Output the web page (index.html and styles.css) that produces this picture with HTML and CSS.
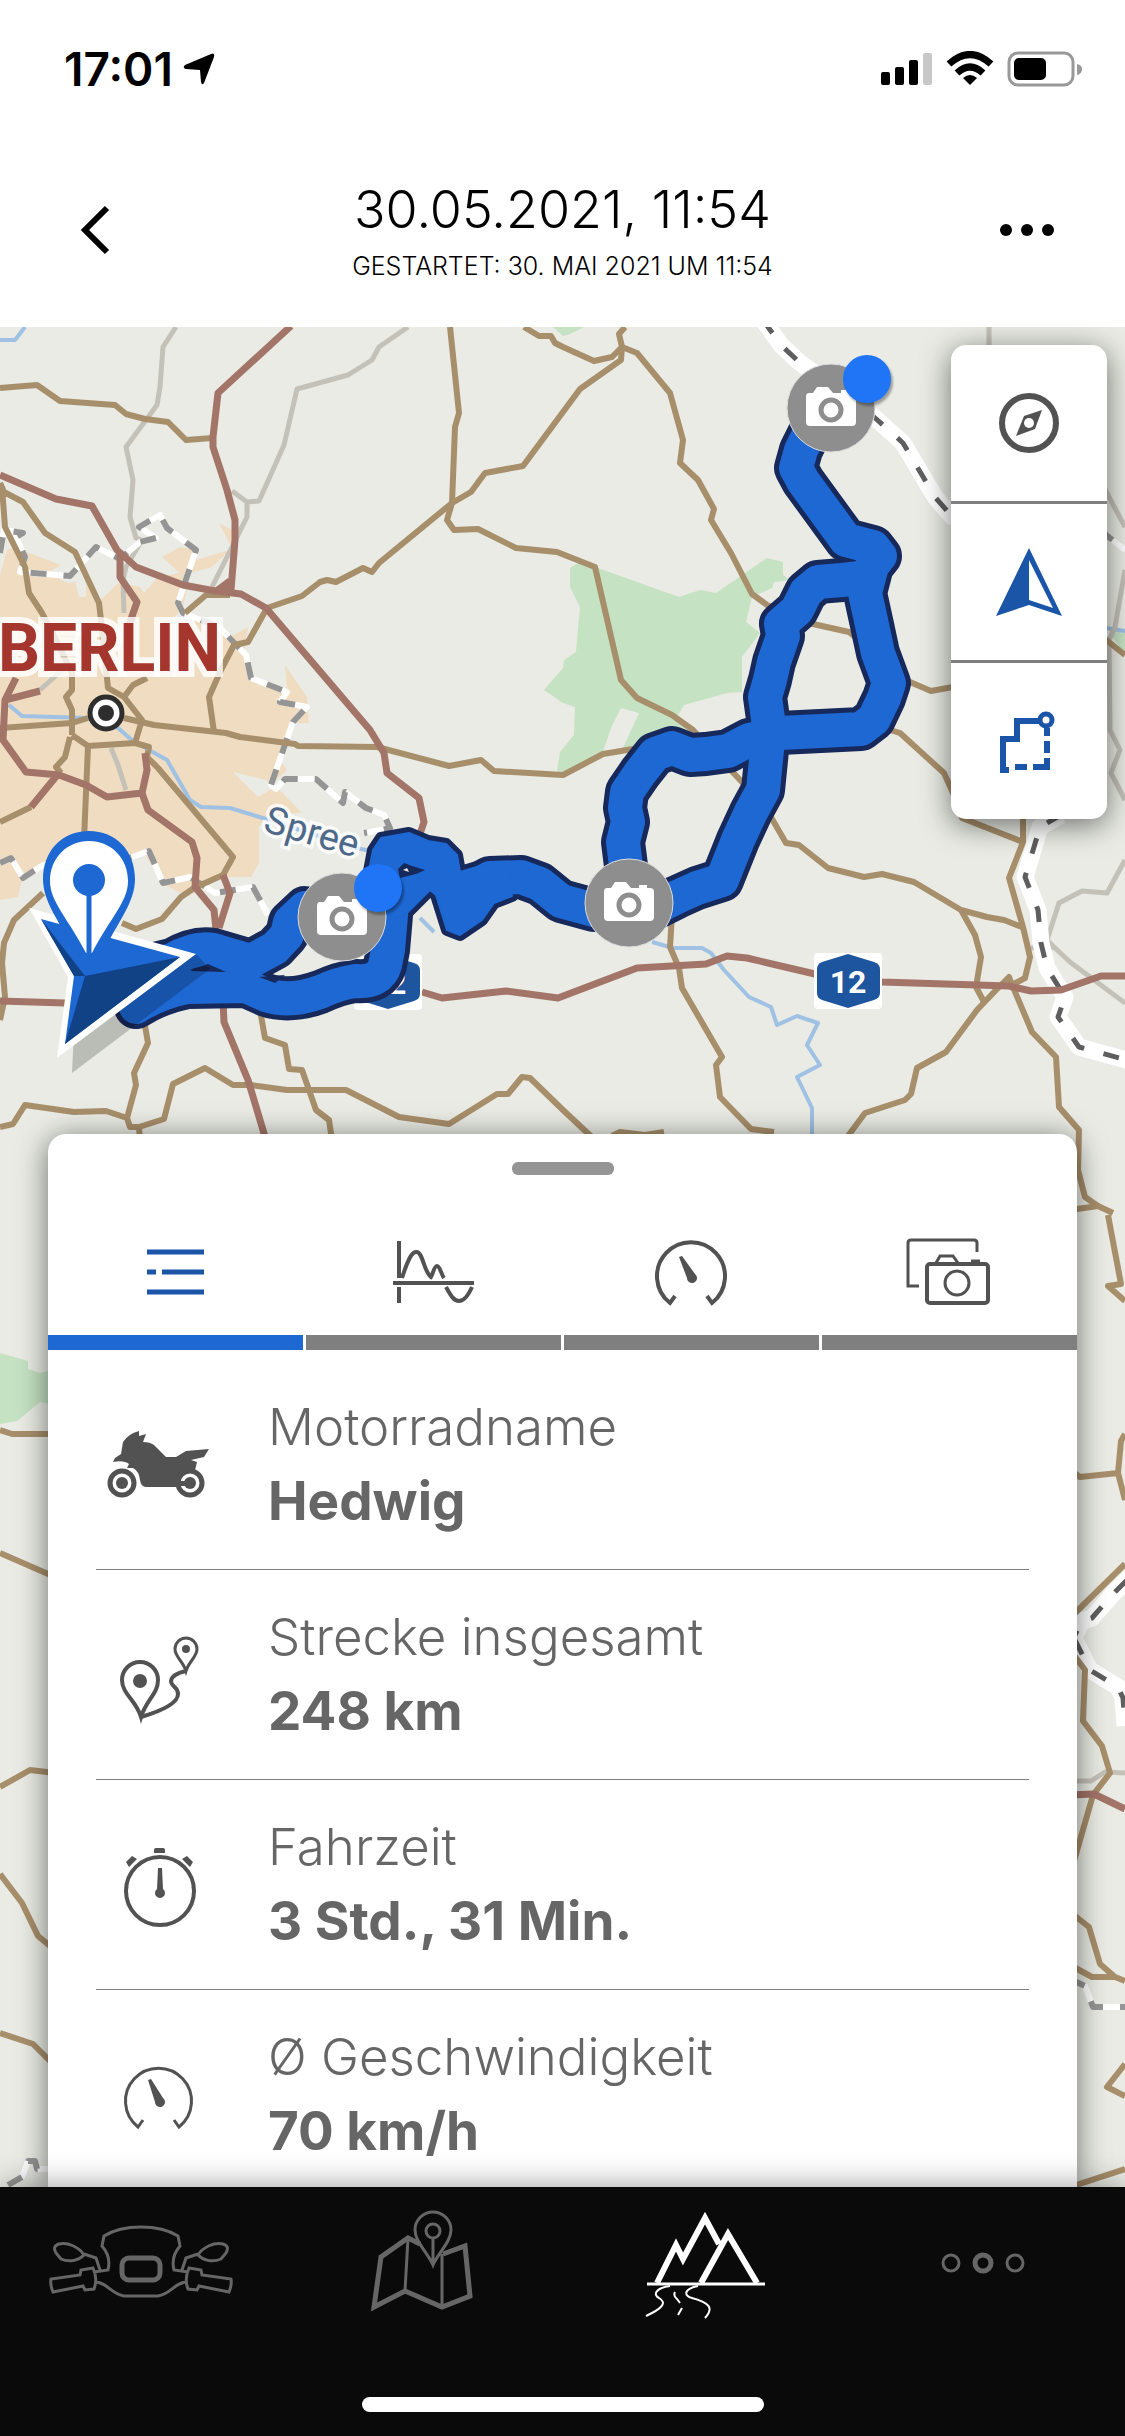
FILE: index.html
```html
<!doctype html>
<html lang="de">
	<head>
		<meta charset="utf-8">
		<meta name="viewport" content="width=device-width, initial-scale=1">
		<title>30.05.2021, 11:54</title>
		<link rel="stylesheet" href="styles.css">
	</head>
	<body>
		<header>
			<div class="status">
				<span class="time">17:01</span>
				<svg class="locate" width="32" height="32" viewBox="0 0 32 32"><path d="M28 1 Q32 -1 31 4 L21 30 Q19 33 18 29 L17 17 L3 16 Q-1 15 2 12z"/></svg>
				<svg class="phone" width="202" height="36" viewBox="0 0 202 36">
					<rect x="1" y="21" width="9" height="13" rx="2"/>
					<rect x="15" y="16" width="9" height="18" rx="2"/>
					<rect x="29" y="9" width="9" height="25" rx="2"/>
					<rect x="43" y="2" width="9" height="32" rx="2" fill="#c8c8c8"/>
					<g fill="none" stroke="#000" stroke-width="7">
						<path d="M69 13 Q90 -6 111 13"/>
						<path d="M77 22 Q90 10 103 22"/>
					</g>
					<path d="M83 27 Q90 21 97 27 L90 34z"/>
					<rect x="129" y="2" width="64" height="32" rx="9" fill="none" stroke="#999" stroke-width="3"/>
					<rect x="134" y="7" width="32" height="22" rx="5"/>
					<path d="M197 13 Q202 14 202 18 Q202 23 197 24z" fill="#999"/>
				</svg>
			</div>
			<div class="titlebar">
				<button class="back" aria-label="Zurück"><svg width="36" height="54" viewBox="0 0 36 54"><path d="M31 5 L9 27 L31 49" fill="none" stroke="#000" stroke-width="6"/></svg></button>
				<div class="title">
					<h1>30.05.2021, 11:54</h1>
					<p>GESTARTET: 30. MAI 2021 UM 11:54</p>
				</div>
				<button class="more" aria-label="Mehr"><svg width="60" height="16" viewBox="0 0 60 16"><circle cx="9" cy="8" r="6"/><circle cx="30" cy="8" r="6"/><circle cx="51" cy="8" r="6"/></svg></button>
			</div>
		</header>
		<main>
			<svg class="map" viewBox="0 327 1125 1860" preserveAspectRatio="xMidYMin slice">
				<defs>
					<g id="camera">
						<circle r="44" fill="#8e8e8e" stroke="#ddd"/>
						<path d="M-22 -15 H-18 L-14 -21 H-3 L2 -15 H10 V-18 H18 V-15 H21 Q25 -15 25 -11 V14 Q25 18 21 18 H-21 Q-25 18 -25 14 V-11 Q-25 -15 -22 -15z" fill="#fff"/>
						<circle cy="2" r="10" fill="#fff" stroke="#8e8e8e" stroke-width="5"/>
					</g>
					<g id="track" fill="none">
						<path d="M822 415 L810 432 L801 450 L796 468 L803 481 L846 540 L873 547 L880 556 L872 566 L865 593 L872 625 L878 653 L889 683 L884 698 L874 719 L861 729 L780 733 L749 740 L728 751 L706 754 L690 755 L672 748 L655 754 L640 773 L627 792 L625 808 L628 822 L623 842 L626 866 L629 902"/>
						<path d="M860 578 L842 580 L818 582 L806 592 L797 610 L781 624 L783 636 L774 662 L770 680 L765 697 L769 726 L767 750 L763 790 L751 812 L738 840 L722 880 L697 888 L677 897 L655 908 L629 903 L594 910 L561 901 L540 884 L521 877 L490 878 L460 895"/>
						<path d="M391 915 L388 950 L385 965 Q380 983 355 981 Q340 983 320 992 Q290 1003 266 995 L246 986 L187 987 Q160 992 136 1007"/>
						<path d="M110 975 L172 960 Q200 944 220 952 L251 961 L275 948 L287 935 L290 922 L305 908 L342 915"/>
					</g>
					<path id="cluster" d="M381 838 L409 833 L428 841 L446 844 L457 855 L460 872 L494 862 L510 866 L512 896 L494 903 L482 920 L460 935 L447 930 L436 895 L430 890 L400 920 L372 905 L369 871 L373 850z"/>
				</defs>
				<rect y="327" width="1125" height="1860" fill="#e9ebe4"/>
				<g fill="#c5e2c3">
					<path d="M570 568 L578 563 L595 567 L679 597 L700 590 L716 593 L767 558 L783 562 L783 575 L790 580 L774 582 L772 588 L752 597 L746 622 L760 633 L742 657 L742 692 L727 693 L684 705 L677 717 L690 730 L639 748 L603 754 L562 773 L557 772 L560 752 L574 735 L575 707 L563 703 L544 690 L563 668 L564 660 L576 652 L580 607 L570 587z"/>
					<path d="M553 327 L563 336 L570 334 L584 327z"/>
					<path d="M0 1353 L28 1361 L28 1369 L40 1373 L60 1368 L60 1406 L40 1402 L17 1421 L0 1424z"/>
					<path d="M1110 633 L1125 631 V655z"/>
				</g>
				<path d="M621 708 L639 713 L622 750 L602 754 L611 728z" fill="#e9ebe4"/>
				<!-- city area -->
				<path d="M0 575 L7 550 L14 547 L29 553 L61 565 L47 573 L68 583 L75 582 L79 597 L86 597 L86 583 L97 603 L108 593 L118 583 L140 587 L144 593 L158 577 L180 573 L162 557 L180 547 L196 550 L190 567 L196 560 L230 550 L212 567 L190 573 L183 607 L172 620 L201 620 L230 637 L248 627 L244 653 L251 677 L287 690 L285 665 L307 697 L309 723 L294 723 L287 733 L278 757 L287 770 L273 783 L302 813 L270 813 L259 827 L259 863 L251 877 L223 877 L187 897 L162 883 L144 853 L122 863 L43 867 L22 880 L18 897 L0 900z M219 523 L232 530 L233 550z" fill="#f0dcc1"/>
				<path d="M233 772 L266 780 L275 787 L258 797z" fill="#e9ebe4"/>
				<g fill="none" stroke-linejoin="round">
					<g stroke="#9fc1e4" stroke-width="4">
						<path d="M0 340 L15 340 L25 327 M9 705 L22 716 L88 718 L118 728 L133 741 L149 750 L167 760 L190 800 L201 807 L230 808 L266 819 L352 847 L375 852"/>
						<path d="M652 942 L673 948 L702 948 L711 953 L724 970 L749 997 L771 1007 L777 1025 L797 1016 L818 1023 L807 1045 L820 1065 L797 1077 L812 1108 L812 1140 M1100 627 L1125 631 M420 918 L434 932"/>
					</g>
					<g stroke="#c4c1b9" stroke-width="5">
						<path d="M176 327 L163 347 L160 387 L157 405 L126 447 L133 480 L130 517 L136 538 L142 540 L126 567 L123 580 L124 613 M408 327 L379 347 L372 360 L348 375 L297 389 L284 445 L259 501 L247 502 L232 491 M247 502 L247 517 L212 587 M70 663 L40 690 M111 748 L118 765 L126 790"/>
						<path d="M1125 860 L1107 893 L1082 891 L1059 903 L1047 940 L1054 947 L1070 962 L1125 1003 M1031 948 L1054 947 M1100 480 L1125 527 M1125 570 L1115 627 L1109 640 L1110 730 L1120 750 L1111 773 L1125 800 M989 327 V350 M1070 1781 L1091 1781 L1105 1772 L1125 1773"/>
					</g>
					<g>
						<path class="halo" d="M763 320 L781 345 L799 362 L874 417 L903 443 L935 497 L955 520 M1061 815 L1040 827 L1025 877 L1038 910 L1041 943 L1047 968 L1065 997 L1058 1017 L1079 1047 L1130 1061 M1070 1645 L1082 1621 L1092 1618 L1112 1595 L1130 1577 M1075 1640 L1090 1670 L1118 1687 L1123 1698 L1125 1726"/>
						<path class="dash" d="M763 320 L781 345 L799 362 L874 417 L903 443 L935 497 L955 520 M1061 815 L1040 827 L1025 877 L1038 910 L1041 943 L1047 968 L1065 997 L1058 1017 L1079 1047 L1130 1061 M1070 1645 L1082 1621 L1092 1618 L1112 1595 L1130 1577 M1075 1640 L1090 1670 L1118 1687 L1123 1698 L1125 1726"/>
						<path stroke="#fff" stroke-width="6" d="M0 553 L4 530 L23 533 L16 537 L25 557 L20 572 L70 576 L96 547 L120 559 L140 542 L156 538 L139 527 L160 515 L167 528 L196 550 L178 603 L183 613 L219 627 L246 655 L251 678 L287 692 L280 702 L307 707 L293 722 L289 733 L271 785 L276 789 L285 779 L316 779 L343 803 L345 792 L366 808 L384 815 L390 828 L381 830 L364 833 M0 863 L11 858 L23 878 L43 865 L129 858 L149 851 L163 883 L190 877 L215 893 L253 887 L268 915 M1070 1979 L1085 1986 L1093 2007 L1125 2007 M8 2185 L22 2177 L28 2161 L35 2161 L37 2169 L52 2169 M1100 530 L1125 550"/>
						<path stroke="#959595" stroke-width="6" stroke-dasharray="16 17" d="M0 553 L4 530 L23 533 L16 537 L25 557 L20 572 L70 576 L96 547 L120 559 L140 542 L156 538 L139 527 L160 515 L167 528 L196 550 L178 603 L183 613 L219 627 L246 655 L251 678 L287 692 L280 702 L307 707 L293 722 L289 733 L271 785 L276 789 L285 779 L316 779 L343 803 L345 792 L366 808 L384 815 L390 828 L381 830 L364 833 M0 863 L11 858 L23 878 L43 865 L129 858 L149 851 L163 883 L190 877 L215 893 L253 887 L268 915 M1070 1979 L1085 1986 L1093 2007 L1125 2007 M8 2185 L22 2177 L28 2161 L35 2161 L37 2169 L52 2169 M1100 530 L1125 550"/>
					</g>
					<g stroke="#a88f6b" stroke-width="6">
						<path d="M0 388 L37 385 L60 401 L115 405 L126 414 L145 419 L168 422 L186 440 L212 438"/>
						<path d="M450 327 L459 413 L455 427 L452 503 L447 520 L454 530 L478 529 L516 548 L557 552 L595 567 L621 680 L637 698 L672 715 L693 730 L742 782 L768 812 L786 843 L799 845 L828 868 L864 877 L882 874 L914 882 L961 910 L987 917 L1004 920 L1022 927"/>
						<path d="M625 327 L619 334 L622 347 L621 360 L580 389 L563 412 L523 466 L485 473 L471 492 L452 503 L379 563 L372 572 L363 568 L336 582 L327 580 L320 582 L302 596 L267 608 L248 642 L234 645 L221 670 L209 697 L214 732"/>
						<path d="M524 327 L539 336 L551 336 L555 343 L563 347 L594 361 L612 357 L622 347 L637 353 L670 393 L683 440 L680 463 L698 480 L714 509 L711 520 L731 553 L752 594 L767 605 L813 624 L849 632 L910 682 L931 691 L953 687"/>
						<path d="M0 483 L4 492 L23 502 L45 533 L75 552 L99 603 L101 620 L108 688 L124 697 L142 720 L135 743 M2 487 L5 527 L25 567 L29 593 L42 613 L56 640 L72 673 L72 690 L66 697 L72 710 L72 735 M124 697 L133 685 L147 678 M185 613 L206 595 L230 595"/>
						<path d="M0 728 L72 723 L88 718 M124 718 L154 725 L226 733 L240 737 L295 744 L298 746 L377 747 L449 766 L481 760 L494 771 L563 775 L603 754 L639 748"/>
						<path d="M72 735 L88 746 L135 743 L149 747 L147 757 L158 768 L233 857 L223 875 L194 888 L181 897 L162 919 L136 929 L122 923 M88 746 L84 840 M70 737 L65 757 L56 767 L61 773 M31 807 L0 822 M43 893 L14 920 L4 943 L2 963 L5 997 L0 1020"/>
						<path d="M144 1020 L148 1043 L134 1073 L136 1085 L127 1118 L130 1127 L139 1127 L140 1140 M139 1127 L164 1119 L173 1084 L205 1068 L233 1085 L251 1085 L287 1090 L346 1090 L399 1117 L449 1124 L497 1094 L508 1094 L522 1077 L530 1078 L563 1110 L595 1140 M0 1127 L13 1124 L25 1105 L74 1112 L106 1111 L127 1118 M260 1010 L265 1038 L285 1045 L289 1069 L302 1070 L316 1110 L329 1120 L332 1140"/>
						<path d="M672 915 L670 947 L679 968 L682 988 L722 1057 L716 1065 L720 1097 L751 1129 L774 1132 M612 1136 L620 1132 L645 1135 L664 1132 M845 1140 L865 1113 L905 1100 L911 1094 L917 1068 L946 1052 L977 1010 L996 990 L1009 977 L1012 985 L1025 978 L1030 957 L1023 927 L1009 878 L1023 842 L1023 815 M890 730 L900 733 L944 773 L953 793 L962 818 L1023 842 M961 910 L975 935 L981 957 L976 987 L984 1002 M1013 987 L1032 1032 L1056 1057 L1059 1107 L1079 1130 L1078 1170 L1085 1197 L1098 1206 L1113 1213 M1070 1210 L1098 1206 M1108 1215 L1121 1284 L1108 1286 L1125 1301 M1070 1470 L1080 1477 L1118 1473 L1121 1441 L1125 1434 M1118 1473 L1125 1500 M1070 1618 L1125 1564 M1070 1650 L1085 1670 L1083 1721 L1102 1746 L1110 1773 L1093 1795 L1070 1875 M1070 1912 L1089 1927 L1100 1964 L1115 1977 L1125 1981 M1070 1965 L1092 1977 L1115 1977 M1125 2064 L1107 2087 L1125 2096 M1070 2187 L1125 2169 M1100 635 L1125 655"/>
						<path d="M0 1430 L12 1434 L55 1434 M0 1553 L55 1577 M0 1787 L30 1770 L55 1773 M0 1874 L22 1903 L38 1936 L55 1950 M0 2033 L33 2044 L55 2066"/>
					</g>
					<g stroke="#a37468" stroke-width="7">
						<path d="M291 326 L218 393 L213 437 L213 447 L227 490 L235 520 L235 540 L231 590 L215 591 M0 475 L56 499 L92 506 L117 550 L136 567 L183 585 L215 591 L241 594 L266 608 L370 730 L384 753 L387 773 L419 798 L424 822 L418 840 M120 553 L120 577 L137 602 L129 625 M16 678 L5 700 L3 740 L26 772 L59 775 L86 785 L107 797 L142 793 L147 770 L145 753 M5 700 L40 691 M59 773 L31 807 M142 793 L148 810 L192 842 L197 858 L195 887 L214 910 L217 940 M223 875 L230 893 L219 928"/>
						<path d="M0 1001 L65 1003 L120 1003 M223 1000 L224 1022 L248 1080 L266 1140 M422 992 L442 998 L506 991 L558 998 L637 968 L706 964 L727 956 L747 958 L815 974 L882 982 L1009 986 L1031 991 L1061 990 L1101 976 L1125 976 M1070 1795 L1094 1794 L1125 1809"/>
					</g>
				</g>
				<path d="M212 590 L228 578 L236 595z" fill="#a37468"/>
				<circle cx="106" cy="713" r="16" fill="#fff" stroke="#2e2e2e" stroke-width="5"/>
				<circle cx="106" cy="713" r="8" fill="#2e2e2e"/>
				<text class="city" x="-2" y="671">BERLIN</text>
				<text class="river" x="262" y="831" transform="rotate(16 262 831)">Spree</text>
				<g class="shield">
					<rect x="814" y="953" width="68" height="56" rx="4" fill="#fff"/>
					<path d="M848 954 L874 962 Q880 964 880 969 V993 Q880 998 874 1000 L848 1008 L822 1000 Q817 998 817 993 V969 Q817 964 822 962z" fill="#1d559f"/>
					<text x="848" y="993">12</text>
				</g>
				<g class="shield">
					<rect x="354" y="954" width="68" height="56" rx="4" fill="#fff"/>
					<path d="M388 955 L414 963 Q420 965 420 970 V994 Q420 999 414 1001 L388 1009 L362 1001 Q357 999 357 994 V970 Q357 965 362 963z" fill="#1d559f"/>
					<text x="388" y="994">12</text>
				</g>
				<g class="track-edge">
					<use href="#track"/>
					<use href="#cluster" class="cluster"/>
				</g>
				<g class="track">
					<use href="#track"/>
					<use href="#cluster" class="cluster"/>
				</g>
				<path d="M398 869 L404 863 L412 866 L425 870 L416 874 L400 878z" fill="#17285a"/>
				<path d="M403 870 L407 868 L409 872z" fill="#e9ebe4"/>
				<path d="M190 971 L208 964 L226 972z M259 977 L285 975 L275 983z" fill="#17285a"/>
				<!-- bike position -->
				<path d="M72 1073 L210 969 L196 954 L74 1030z" opacity=".2"/>
				<path d="M29 908 L196 954 L57 1058 L68 977z" fill="#fff"/>
				<path d="M41 919 L180 957 L65 1044 L74 976z" fill="#1d68d2"/>
				<path d="M85 976 L180 957 L65 1044z M41 919 L85 976 L74 976z" fill="#114285"/>
				<path d="M89 831 C116 831 135 851 135 879 C135 902 118 922 107 945 L92 953 H86 L71 945 C60 922 43 902 43 879 C43 851 62 831 89 831z" fill="#1d68d2"/>
				<path d="M89 841 C111 841 128 858 128 881 C128 902 110 918 92 953 H86 C68 918 50 902 50 881 C50 858 67 841 89 841z" fill="#fff"/>
				<circle cx="89" cy="880" r="16" fill="#1d68d2"/>
				<path d="M89 880 V960" stroke="#1d68d2" stroke-width="5"/>
				<use href="#camera" x="831" y="408"/>
				<use href="#camera" x="342" y="917"/>
				<use href="#camera" x="629" y="903"/>
				<circle class="dot" cx="867" cy="379" r="24"/>
				<circle class="dot" cx="378" cy="888" r="24"/>
			</svg>
			<div class="controls">
				<button aria-label="Kompass"><svg width="72" height="72" viewBox="0 0 72 72"><circle cx="36" cy="36" r="27" fill="none" stroke="#525252" stroke-width="6"/><path d="M49 23 L31 29 L23 49 L42 42z" fill="#525252"/><circle cx="36" cy="36" r="5" fill="#fff"/></svg></button>
				<button aria-label="Position"><svg width="72" height="72" viewBox="0 0 72 72"><path d="M36 2 L69 70 L36 59 L3 70z" fill="#1a55a8"/><path d="M36 14 L60 62 L36 54z" fill="#fff"/></svg></button>
				<button aria-label="Route"><svg width="72" height="72" viewBox="0 0 72 72"><g fill="none" stroke="#1a55a8" stroke-width="6"><path d="M47 16 H24 V34 H10 V65 H16"/><path d="M22 62 H34 M40 62 H57 M54 65 V53 M54 48 V36 M54 31 V23"/><circle cx="53" cy="15" r="6" stroke-width="5" fill="#fff"/></g></svg></button>
			</div>
			<section class="sheet">
				<div class="handle"></div>
				<div class="tabs">
					<button class="active" aria-label="Liste"><svg width="90" height="72" viewBox="0 0 90 72"><path d="M16 16 H73 M16 36 H25 M31 36 H73 M16 56 H73" stroke="#1a55a8" stroke-width="5"/></svg></button>
					<button aria-label="Verlauf"><svg width="90" height="72" viewBox="0 0 90 72"><g class="line"><path d="M10 5 V42 M10 51 V67"/><path d="M4 47 H85"/><path d="M13 42 C20 20 24 15 28 16 C34 17 35 36 42 41 C44 38 45 30 48 30 C51 30 52 38 55 42 M57 51 C62 60 65 65 70 65 C75 65 79 60 83 51"/></g></svg></button>
					<button aria-label="Tempo"><svg width="90" height="72" viewBox="0 0 90 72"><g class="line"><path d="M28 60 L23 67 A34 34 0 1 1 65 67 L60 60"/></g><path d="M32 21 L35 20 L48 38 A5 5 0 1 1 40 42z" fill="#525252"/></svg></button>
					<button aria-label="Fotos"><svg width="90" height="72" viewBox="0 0 90 72"><g class="line thin"><path d="M14 50 H3 V7 Q3 4 6 4 H69 Q72 4 72 7 V16"/><rect x="22" y="28" width="61" height="39" rx="3" stroke-width="4"/><circle cx="52" cy="47" r="12"/><path d="M31 27 L35 20 H48 L53 27 M66 25 H75"/></g></svg></button>
				</div>
				<ul class="facts">
					<li>
						<svg width="126" height="120" viewBox="0 0 126 120">
							<path d="M17 58 L19 54 L25 50 L27 38 Q32 30 43 27 V32 L50 30 L47 38 Q54 38 58 41 L70 53 H80 L90 47 L113 45 L108 53 L95 56 L101 58 L99 66 Q84 68 83 83 H50 Q45 83 44 76 Q43 67 37 64 L31 64 L33 60 Q28 56 17 58z" fill="#525252"/>
							<g fill="none" stroke="#525252" stroke-width="5"><circle cx="26" cy="79" r="12" fill="#fff"/><circle cx="94" cy="79" r="12" fill="#fff"/></g>
							<circle cx="26" cy="79" r="6" fill="#525252"/><circle cx="94" cy="79" r="6" fill="#525252"/>
							<path d="M80 77 H94 V82 H80z" fill="#525252"/>
						</svg>
						<div><span>Motorradname</span><strong>Hedwig</strong></div>
					</li>
					<li>
						<svg width="126" height="120" viewBox="0 0 126 120">
							<g class="line"><path d="M45 103 C40 86 26 80 26 66 A18 18 0 0 1 62 66 C62 80 50 86 45 103z"/><path d="M45 103 Q82 92 82 80 C82 72 75 73 75 67 Q76 60 90 57"/></g>
							<g class="line thin"><path d="M90 57 C87 47 79 43 79 35 A11 11 0 0 1 101 35 C101 43 93 47 90 57z"/></g>
							<circle cx="44" cy="67" r="7" fill="#525252"/><circle cx="90" cy="35" r="4" fill="#525252"/>
						</svg>
						<div><span>Strecke insgesamt</span><strong>248 km</strong></div>
					</li>
					<li>
						<svg width="126" height="120" viewBox="0 0 126 120">
							<circle cx="64" cy="67" r="34" fill="none" stroke="#525252" stroke-width="4"/>
							<path d="M62 44 H66 L67 65 A5 5 0 1 1 61 65z M58 26 Q58 24 60 24 H67 Q69 24 69 26 V29 H58z M30 38 L36 32 L41 35 L33 43z M97 38 L91 32 L86 35 L94 43z" fill="#525252"/>
						</svg>
						<div><span>Fahrzeit</span><strong>3 Std., 31 Min.</strong></div>
					</li>
					<li>
						<svg width="126" height="120" viewBox="0 0 126 120">
							<g class="line thin"><path d="M47 86 L42 93 A33 33 0 1 1 83 93 L78 86"/></g>
							<path d="M52 46 L55 45 L67 64 A5 5 0 1 1 59 68z" fill="#525252"/>
						</svg>
						<div><span>Ø Geschwindigkeit</span><strong>70 km/h</strong></div>
					</li>
				</ul>
			</section>
		</main>
		<nav>
			<div class="links">
				<a href="#" aria-label="Fahrzeug"><svg width="190" height="112" viewBox="0 0 190 112">
					<g id="bar" fill="none" stroke="currentColor" stroke-width="3"><path d="M95 19 C112 19 124 23 132 28 L134 38 C127 46 126 54 128 62 L142 64 M136 62 L140 50 L152 46 M152 47 C157 39 168 34 177 36 Q184 38 180 45 L175 51 C166 55 157 52 152 47z M143 60 L155 62 L156 67 L185 71 Q186 77 183 84 L153 78 L151 82 L142 81 Q138 71 143 60z M141 74 C129 74 125 86 112 88 H95"/></g>
					<use href="#bar" transform="matrix(-1 0 0 1 190 0)"/>
					<rect x="76" y="50" width="38" height="22" rx="7" fill="none" stroke="currentColor" stroke-width="5"/>
				</svg></a>
				<a href="#" aria-label="Karte"><svg width="190" height="112" viewBox="0 0 190 112"><g fill="none" stroke="currentColor">
					<path stroke-width="5" d="M93 36 L81 30 L54 49 L47 99 L78 83 L115 99 L143 88 L138 38 L116 46"/>
					<path stroke-width="3" d="M81 30 L78 83 M115 46 V99 M106 57 C101 45 88 34 88 22 A18 18 0 0 1 124 22 C124 34 111 45 106 57z M106 30 V56"/>
					<circle stroke-width="3" cx="106" cy="23" r="7"/>
				</g></svg></a>
				<a href="#" class="active" aria-label="Touren"><svg width="190" height="112" viewBox="0 0 190 112"><g fill="none" stroke="currentColor">
					<path stroke-width="6" d="M49 75 L68 37 L75 51 L97 10 L111 36 M93 75 L120 26 L149 75"/>
					<path stroke-width="3" d="M39 76 H157"/>
					<path stroke-width="2" d="M62 78 C47 80 45 87 51 90 C60 95 53 101 38 108 M90 78 C75 81 76 88 84 90 C102 95 106 100 97 110 M67 84 Q65 88 69 91 L72 95 M74 100 L70 107"/>
				</g></svg></a>
				<a href="#" aria-label="Weitere"><svg width="190" height="112" viewBox="0 0 190 112"><g fill="none" stroke="currentColor" stroke-width="3"><circle cx="62" cy="55" r="8"/><circle cx="94" cy="55" r="8" stroke-width="5"/><circle cx="126" cy="55" r="8"/></g></svg></a>
			</div>
			<div class="home"></div>
		</nav>
	</body>
</html>
```
FILE: styles.css
```css
* {
	box-sizing: border-box;
}
html, body {
	margin: 0px;
}
body {
	display: flex;
	flex-direction: column;
	min-height: 100vh;
	background: #fff;
	color: #000;
	font-family: Inter, "Liberation Sans", sans-serif;
}
svg {
	display: block;
	flex: none;
}
button {
	display: flex;
	align-items: center;
	justify-content: center;
	margin: 0px;
	padding: 0px;
	border: 0px;
	background: none;
	cursor: pointer;
}
header {
	height: 327px;
	padding-top: 42px;
}
.status {
	display: flex;
	align-items: center;
	height: 54px;
	padding: 0px 43px 0px 64px;
}
.time {
	font-size: 46px;
	font-weight: 600;
	line-height: 54px;
}
.locate {
	margin-left: 10px;
}
.phone {
	margin-left: auto;
}
.titlebar {
	display: flex;
	align-items: center;
	justify-content: space-between;
	margin-top: 78px;
	padding: 0px 68px;
}
.title {
	text-align: center;
}
.title h1 {
	margin: 0px;
	font-size: 52px;
	font-weight: 300;
	line-height: 72px;
}
.title p {
	margin: 0px;
	font-size: 25px;
	font-weight: 300;
	line-height: 40px;
}
.back, .more {
	width: 60px;
	height: 108px;
}
.back {
	justify-content: flex-start;
	padding-left: 8px;
}

/* map */
main {
	position: relative;
	display: flex;
	flex: 1;
	flex-direction: column;
	justify-content: flex-end;
	overflow: hidden;
}
.map {
	position: absolute;
	top: 0px;
	left: 0px;
	width: 100%;
	height: 100%;
}
.halo {
	stroke: #fff;
	stroke-width: 17px;
}
.dash {
	stroke: #5e5e5e;
	stroke-width: 5px;
	stroke-dasharray: 16 20;
}
.city, .river, .shield text {
	font-family: Roboto, "Open Sans", sans-serif;
}
.city {
	font-size: 66px;
	font-weight: bold;
	fill: #a4362e;
	stroke: #fffc;
	stroke-width: 12px;
	paint-order: stroke;
}
.river {
	font-size: 38px;
	fill: #4f6a88;
	stroke: #fffc;
	stroke-width: 7px;
	paint-order: stroke;
}
.shield text {
	font-size: 32px;
	font-weight: bold;
	text-anchor: middle;
	fill: #fff;
}
.track, .track-edge {
	fill: #1d68d2;
	stroke: #1d68d2;
	stroke-width: 34px;
	stroke-linejoin: round;
	stroke-linecap: round;
}
.track-edge {
	fill: #17285a;
	stroke: #17285a;
	stroke-width: 44px;
}
.track .cluster {
	stroke-width: 2px;
}
.track-edge .cluster {
	stroke-width: 12px;
}
.dot {
	fill: #1f75f5;
	filter: drop-shadow(2px 3px 1px #0005);
}
.controls {
	position: absolute;
	top: 18px;
	right: 18px;
	width: 156px;
	border-radius: 15px;
	background: #fff;
	box-shadow: 0px 6px 30px #0008;
}
.controls button {
	width: 156px;
	height: 156px;
}
.controls button + button {
	height: 159px;
	border-top: 3px solid #7f7f7f;
}

/* bottom sheet */
.sheet {
	position: relative;
	margin: 0px 48px;
	padding-top: 28px;
	border-radius: 18px 18px 0px 0px;
	background: #fff;
	box-shadow: 0px 4px 30px #0008;
}
.handle {
	width: 102px;
	height: 13px;
	margin: 0px auto;
	border-radius: 6px;
	background: #959595;
}
.tabs {
	display: flex;
	gap: 3px;
}
.tabs button {
	flex: 1;
	padding: 61px 0px 27px;
	border-bottom: 15px solid #7f7f7f;
}
.tabs .active {
	border-color: #1d68d2;
}
.line {
	fill: none;
	stroke: #525252;
	stroke-width: 4px;
}
.thin {
	stroke-width: 3px;
}
.facts {
	margin: 0px;
	padding: 10px 48px 0px;
	list-style: none;
}
.facts li {
	display: flex;
	align-items: center;
	gap: 46px;
	padding: 29px 0px 30px;
	border-bottom: 1px solid #7f7f7f;
	color: #666;
	line-height: 75px;
}
.facts li:last-child {
	padding-bottom: 18px;
	border-bottom: 0px;
}
.facts span, .facts strong {
	display: block;
}
.facts span {
	font-size: 51px;
	font-weight: 300;
}
.facts strong {
	font-size: 53px;
	font-weight: 700;
}

/* bottom navigation */
nav {
	position: relative;
	height: 249px;
	background: #0a0a0a;
	box-shadow: 0px 0px 30px #0006;
}
.links {
	display: flex;
	padding-top: 21px;
}
.links a {
	display: flex;
	flex: 1;
	justify-content: center;
	color: #666;
}
.links .active {
	color: #fff;
}
.home {
	width: 402px;
	height: 15px;
	margin: 77px auto 0px;
	border-radius: 8px;
	background: #fff;
}
```
